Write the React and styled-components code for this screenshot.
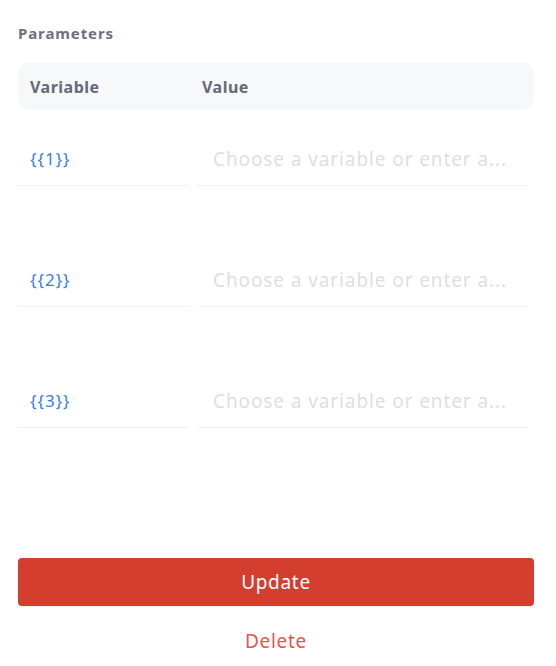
import React from "react";
import styled, { createGlobalStyle } from "styled-components";

const GlobalStyle = createGlobalStyle`
  body {
    margin: 0;
    background: #ffffff;
    font-family: "Noto Sans", "Open Sans", sans-serif;
  }
`;

const Panel = styled.div`
  width: 556px;
  height: 666px;
  box-sizing: border-box;
  padding: 22px 22px 0 18px;
  display: flex;
  flex-direction: column;
`;

const Title = styled.div`
  font-size: 15px;
  font-weight: 700;
  color: #6b7180;
  line-height: 22px;
  letter-spacing: 0.9px;
  margin-bottom: 19px;
`;

const Header = styled.div`
  height: 47px;
  background: #f7f8fa;
  border-radius: 10px;
  display: grid;
  grid-template-columns: 172px 1fr;
  align-items: center;
  padding-left: 12px;
  font-size: 16px;
  font-weight: 700;
  letter-spacing: 0.5px;
  color: #646a78;
`;

const Rows = styled.div`
  display: flex;
  flex-direction: column;
  gap: 73px;
  margin-top: 28px;
`;

const Row = styled.div`
  display: grid;
  grid-template-columns: 171px 331px;
  gap: 8px;
`;

const Cell = styled.div`
  height: 48px;
  box-sizing: border-box;
  border-bottom: 1px solid #f0f1f3;
  display: flex;
  align-items: center;
  padding-left: ${(p) => p.$pad}px;
  padding-bottom: 6px;
  font-size: ${(p) => p.$size}px;
  color: ${(p) => p.$color};
  letter-spacing: ${(p) => p.$spacing}px;
  white-space: nowrap;
  overflow: hidden;
`;

const Spacer = styled.div`
  flex: 1;
`;

const UpdateButton = styled.button`
  flex-shrink: 0;
  height: 48px;
  width: 516px;
  border: none;
  border-radius: 4px;
  background: #d43e2f;
  color: #ffffff;
  font-family: inherit;
  font-size: 19px;
  letter-spacing: 0.7px;
  box-shadow: 0 1px 2px rgba(0, 0, 0, 0.08);
`;

const DeleteButton = styled.button`
  flex-shrink: 0;
  width: 516px;
  margin: 13px 0 3px;
  height: 44px;
  border: none;
  background: none;
  color: #e8534e;
  font-family: inherit;
  font-size: 19px;
  letter-spacing: 0.7px;
`;

const params = ["{{1}}", "{{2}}", "{{3}}"];

export default function App() {
  return (
    <>
      <GlobalStyle />
      <Panel>
        <Title>Parameters</Title>
        <Header>
          <span>Variable</span>
          <span>Value</span>
        </Header>
        <Rows>
          {params.map((p) => (
            <Row key={p}>
              <Cell $pad={12} $size={17} $spacing={1} $color="#3a7ce6">
                {p}
              </Cell>
              <Cell $pad={16} $size={19} $spacing={0.9} $color="#dedfe1">
                Choose a variable or enter a...
              </Cell>
            </Row>
          ))}
        </Rows>
        <Spacer />
        <UpdateButton>Update</UpdateButton>
        <DeleteButton>Delete</DeleteButton>
      </Panel>
    </>
  );
}
